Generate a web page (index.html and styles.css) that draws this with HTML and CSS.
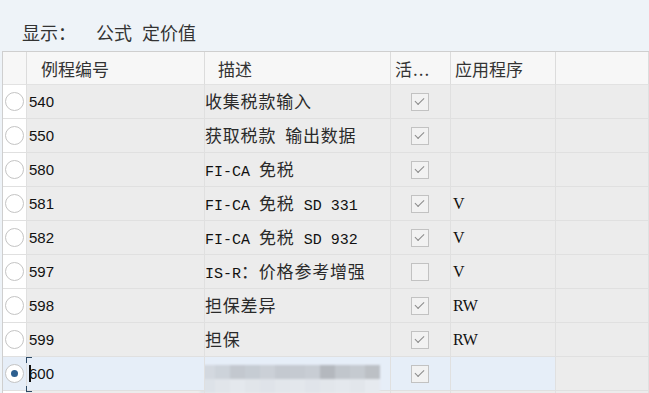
FILE: index.html
```html
<!DOCTYPE html>
<html>
<head>
  <meta charset="utf-8">
  <title>例程</title>
<link rel="stylesheet" href="styles.css">
</head>
<body>
<div class="show">
  <span class="show-label">显示：</span>
  <span class="show-link">公式</span>
  <span class="show-link">定价值</span>
</div>

<div class="grid">
  <div class="hd sel"></div>
  <div class="hd c1">例程编号</div>
  <div class="hd c2">描述</div>
  <div class="hd c3">活...</div>
  <div class="hd c4">应用程序</div>
  <div class="hd c5"></div>

  <div class="sel"><span class="radio"></span></div>
  <div class="num">540</div>
  <div class="desc">收集税款输入</div>
  <div class="chk"><span class="box on"></span></div>
  <div class="app"></div>
  <div class="fill"></div>

  <div class="sel"><span class="radio"></span></div>
  <div class="num">550</div>
  <div class="desc">获取税款<span class="lat"> </span>输出数据</div>
  <div class="chk"><span class="box on"></span></div>
  <div class="app"></div>
  <div class="fill"></div>

  <div class="sel"><span class="radio"></span></div>
  <div class="num">580</div>
  <div class="desc"><span class="lat">FI-CA </span>免税</div>
  <div class="chk"><span class="box on"></span></div>
  <div class="app"></div>
  <div class="fill"></div>

  <div class="sel"><span class="radio"></span></div>
  <div class="num">581</div>
  <div class="desc"><span class="lat">FI-CA </span>免税<span class="lat"> SD 331</span></div>
  <div class="chk"><span class="box on"></span></div>
  <div class="app">V</div>
  <div class="fill"></div>

  <div class="sel"><span class="radio"></span></div>
  <div class="num">582</div>
  <div class="desc"><span class="lat">FI-CA </span>免税<span class="lat"> SD 932</span></div>
  <div class="chk"><span class="box on"></span></div>
  <div class="app">V</div>
  <div class="fill"></div>

  <div class="sel"><span class="radio"></span></div>
  <div class="num">597</div>
  <div class="desc"><span class="lat">IS-R</span>：价格参考增强</div>
  <div class="chk"><span class="box"></span></div>
  <div class="app">V</div>
  <div class="fill"></div>

  <div class="sel"><span class="radio"></span></div>
  <div class="num">598</div>
  <div class="desc">担保差异</div>
  <div class="chk"><span class="box on"></span></div>
  <div class="app">RW</div>
  <div class="fill"></div>

  <div class="sel"><span class="radio"></span></div>
  <div class="num">599</div>
  <div class="desc">担保</div>
  <div class="chk"><span class="box on"></span></div>
  <div class="app">RW</div>
  <div class="fill"></div>

  <div class="sel cur"><span class="radio on"></span></div>
  <div class="num cur focus"><span class="caret"></span>600</div>
  <div class="desc cur">
    <div class="blur">
      <div class="blur-row">
        <i style="background:#d3d8df"></i><i style="background:#cdd3da"></i><i style="background:#c3c8cf"></i><i style="background:#c6ccd3"></i><i style="background:#cbd0d7"></i><i style="background:#c4c9d0"></i><i style="background:#c5cad1"></i><i style="background:#c8cdd4"></i><i style="background:#b4b8be"></i><i style="background:#c1c6cc"></i><i style="background:#c5cad0"></i><i style="background:#bcc0c5"></i>
      </div>
      <div class="blur-row">
        <i style="background:#dde2e8"></i><i style="background:#e1e5ea"></i><i style="background:#e4e8ed"></i><i style="background:#e1e5ea"></i><i style="background:#dfe3e9"></i><i style="background:#e2e6eb"></i><i style="background:#e3e7ec"></i><i style="background:#e0e4ea"></i><i style="background:#e2e6eb"></i><i style="background:#e4e8ed"></i><i style="background:#e2e6eb"></i><i style="background:#e6eaef"></i>
      </div>
    </div>
  </div>
  <div class="chk cur"><span class="box on"></span></div>
  <div class="app cur"></div>
  <div class="fill"></div>

  <div class="sel"></div>
  <div class="num"></div>
  <div class="desc"></div>
  <div class="chk"></div>
  <div class="app"></div>
  <div class="fill"></div>
</div>
</body>
</html>
```

FILE: styles.css
```css
body {
  margin: 0;
  height: 393px;
  background-color: #eef3f8;
  font-family: "Noto Sans CJK SC", sans-serif;
  color: #222;
  overflow: hidden;
}

.show {
  height: 51px;
  padding-left: 22px;
  box-sizing: border-box;
  padding-top: 19px;
  font-size: 18px;
  line-height: 26px;
  color: #333;
}
.show-label {
  margin-right: 16px;
}
.show-link {
  margin-right: 6px;
}

.grid {
  display: grid;
  grid-template-columns: 24px 178px 186px 60px 105px 1fr;
  grid-template-rows: 33px repeat(9, 34px) 3px;
  margin-left: 2px;
  border-top: 1px solid #cfcfcf;
  border-left: 1px solid #cfcfcf;
  background-color: #ececec;
}
.grid > div {
  border-right: 1px solid #e0e0e0;
  border-bottom: 1px solid #e0e0e0;
  display: flex;
  align-items: center;
  white-space: nowrap;
  position: relative;
  overflow: hidden;
}

.hd {
  background-color: #f7f7f7;
  font-size: 17px;
  color: #333;
  border-right-color: #dcdcdc !important;
  border-bottom-color: #e2e2e2 !important;
}
.hd.c1 { padding-left: 14px; }
.hd.c2 { padding-left: 13px; }
.hd.c3 { padding-left: 4px; letter-spacing: 1px; }
.hd.c4 { padding-left: 4px; }

.sel {
  background-color: #fff;
  justify-content: center;
}
.hd.sel { background-color: #f7f7f7; }

.radio {
  width: 17px;
  height: 17px;
  border: 1px solid #c4c4c4;
  border-radius: 50%;
  background: #fff;
  display: flex;
  align-items: center;
  justify-content: center;
}
.radio.on::after {
  content: "";
  width: 7px;
  height: 7px;
  border-radius: 50%;
  background-color: #2d5f8f;
}

.num {
  padding-left: 2px;
  font-family: "Liberation Sans", sans-serif;
  font-size: 15px;
  color: #111;
}
.grid > .num.focus {
  overflow: visible;
  z-index: 1;
}

.grid > .desc {
  display: block;
  font-family: "Noto Sans CJK SC", sans-serif;
  font-size: 17px;
  line-height: 32px;
  letter-spacing: 0.8px;
  color: #2a2a2a;
}
.grid > .desc.cur {
  overflow: visible;
}
.desc .lat {
  font-family: "Liberation Mono", monospace;
  font-size: 15px;
  letter-spacing: 0;
  color: #111;
}

.chk {
  justify-content: center;
  padding-right: 2px;
}
.box {
  width: 16px;
  height: 16px;
  border: 1px solid #c2c2c2;
  background-color: #f2f2f2;
  display: flex;
  align-items: center;
  justify-content: center;
}
.box.on::after {
  content: "";
  width: 8px;
  height: 4px;
  border-left: 1.5px solid #8a8a8a;
  border-bottom: 1.5px solid #8a8a8a;
  transform: rotate(-45deg) translate(1px, -1px);
}

.app {
  padding-left: 2px;
  font-family: "Liberation Serif", serif;
  font-size: 16px;
  color: #111;
}

.cur {
  background-color: #e6eef8;
}

.focus::before,
.focus::after {
  content: "";
  position: absolute;
  width: 5px;
  height: 5px;
  border-color: #2d4a66;
  border-style: solid;
}
.focus::before {
  left: -1px;
  top: 0;
  border-width: 1px 0 0 1px;
}
.focus::after {
  left: -1px;
  bottom: -2px;
  border-width: 0 0 1px 1px;
}
.caret {
  width: 2px;
  height: 17px;
  background-color: #111;
  margin-right: -2px;
}

.blur {
  margin-left: -5px;
  margin-top: 8px;
  filter: blur(1px);
}
.blur-row {
  display: flex;
  height: 14px;
}
.blur-row i {
  width: 15px;
  height: 14px;
}
```
